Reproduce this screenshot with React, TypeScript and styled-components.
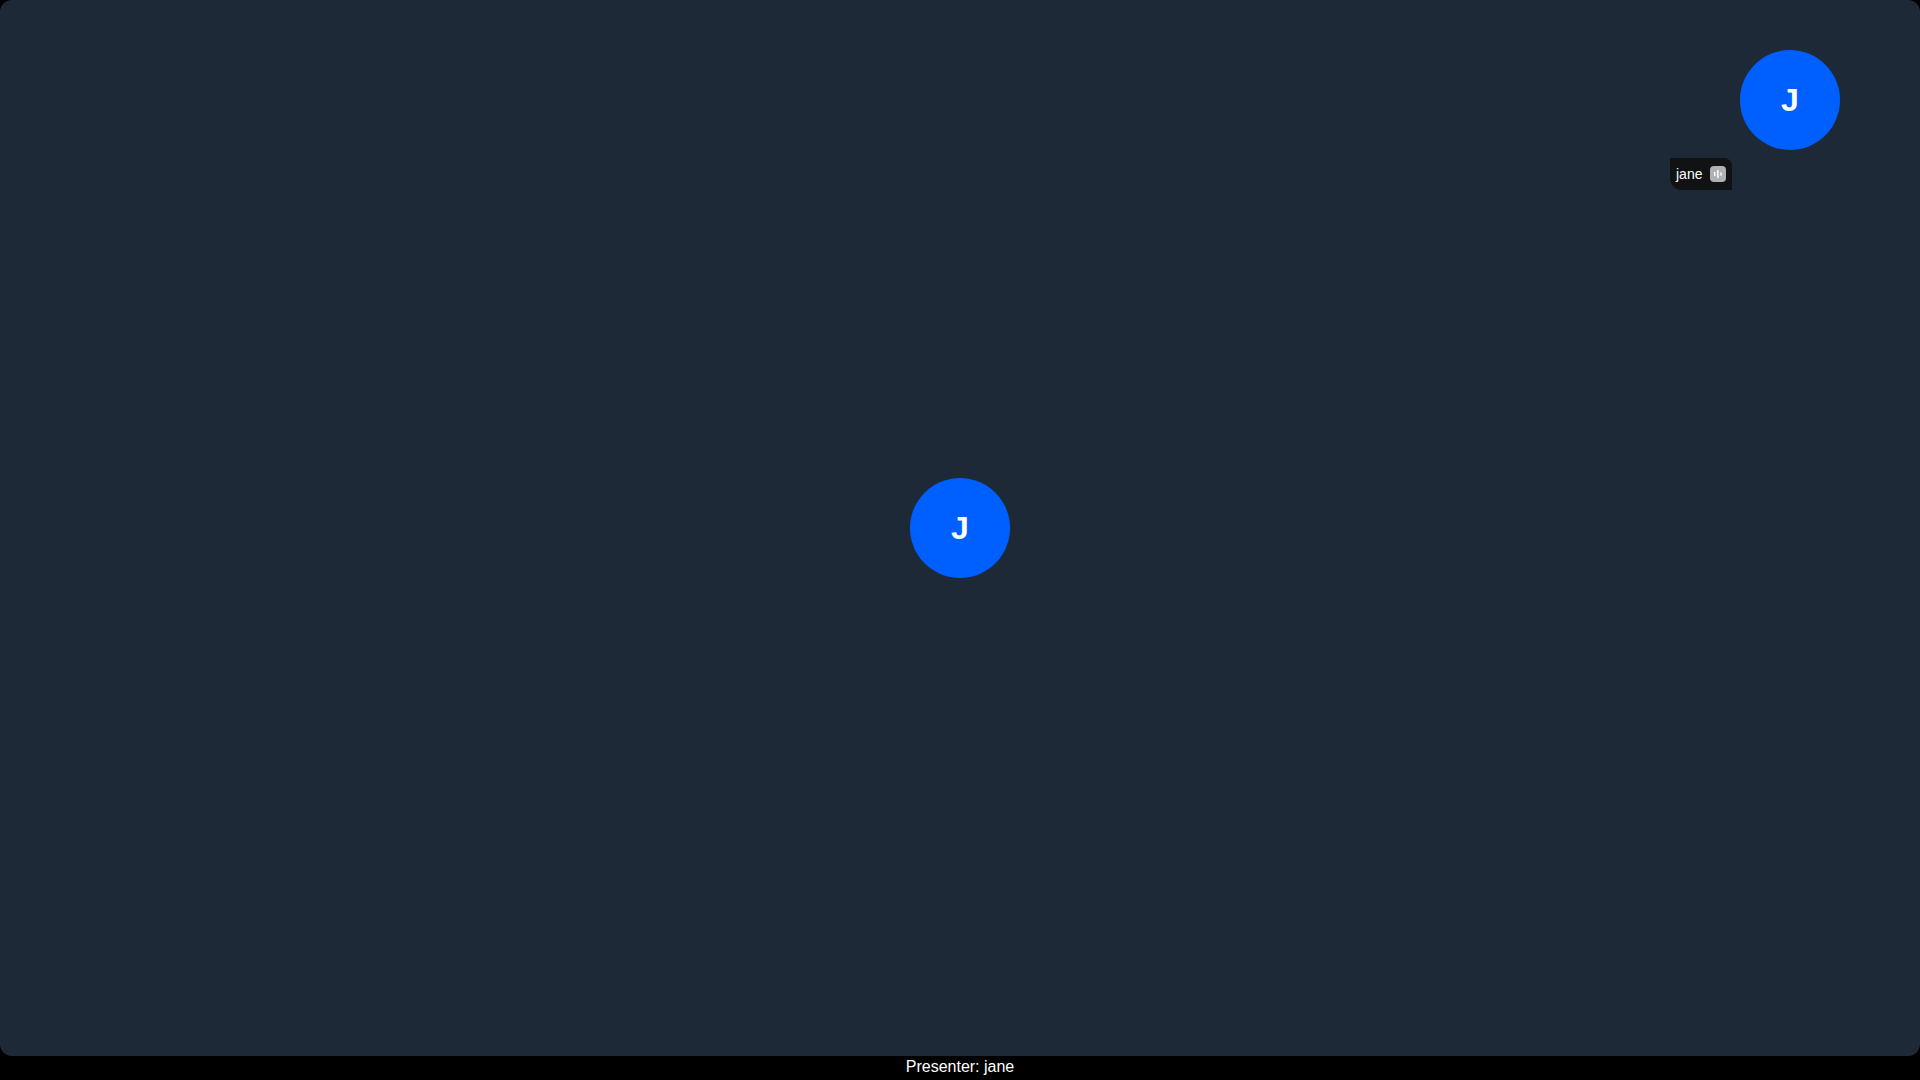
import React from "react";
import styled, { createGlobalStyle } from "styled-components";

const GlobalStyle = createGlobalStyle`
  *, *::before, *::after { box-sizing: border-box; }
  body {
    margin: 0;
    background: #000;
    font-family: "Liberation Sans", Arial, sans-serif;
    overflow: hidden;
  }
`;

const Screen = styled.main`
  display: grid;
  grid-template-rows: 1fr 24px;
  width: 100vw;
  height: 100vh;
  background: #000;
`;

const Stage = styled.section`
  position: relative;
  display: flex;
  align-items: center;
  justify-content: center;
  border-radius: 12px;
  background: #1e2938;
`;

const Avatar = styled.div`
  display: flex;
  align-items: center;
  justify-content: center;
  width: 100px;
  height: 100px;
  border-radius: 50%;
  background: #005fff;
  color: #fff;
  font-size: 32px;
  font-weight: 700;
`;

const SelfView = styled.aside`
  position: absolute;
  top: 10px;
  right: 10px;
  display: flex;
  align-items: center;
  justify-content: center;
  width: 240px;
  height: 180px;
  border-radius: 12px;
  background: #1e2938;
`;

const NameTag = styled.div`
  position: absolute;
  left: 0;
  bottom: 0;
  display: flex;
  align-items: center;
  gap: 8px;
  width: 62px;
  height: 32px;
  padding: 0 6px;
  border-radius: 0 8px 0 12px;
  background: #101213;
  color: #fff;
  font-size: 14px;
  line-height: 20px;
`;

const SpeakingBadge = styled.svg`
  flex: none;
  width: 16px;
  height: 16px;
  margin-left: auto;
  border-radius: 4px;
  background: #b0b1b2;
  fill: #fff;
`;

const Caption = styled.footer`
  display: flex;
  justify-content: center;
  color: #fff;
  font-size: 16px;
  line-height: 22px;
`;

export default function App() {
  return (
    <>
      <GlobalStyle />
      <Screen>
        <Stage>
          <Avatar>J</Avatar>
          <SelfView>
            <Avatar>J</Avatar>
            <NameTag>
              jane
              <SpeakingBadge viewBox="0 0 16 16" aria-hidden="true">
                <rect x="4" y="5.7" width="1.4" height="4.6" rx="0.5" />
                <rect x="7.1" y="4" width="1.5" height="8" rx="0.5" />
                <rect x="10.3" y="6.2" width="1.4" height="3.6" rx="0.5" />
              </SpeakingBadge>
            </NameTag>
          </SelfView>
        </Stage>
        <Caption>Presenter: jane</Caption>
      </Screen>
    </>
  );
}
